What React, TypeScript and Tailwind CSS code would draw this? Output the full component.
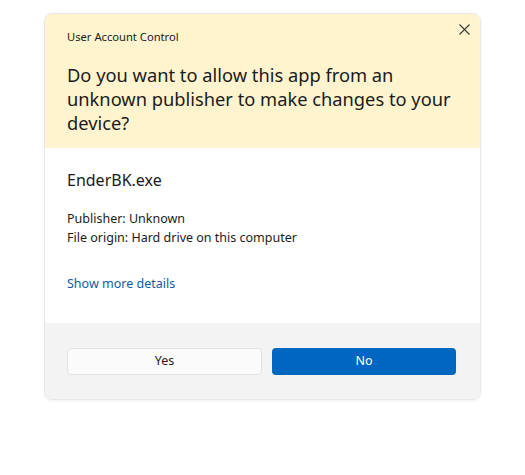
import React from "react";

const font = { fontFamily: '"Noto Sans", "Open Sans", sans-serif' };

// ─── close glyph ──────────────────────────────────────────────────────────
const CloseIcon = () => (
  <svg width="11" height="11" viewBox="0 0 11 11" className="text-[#3a3a3a]">
    <path d="M0.5 0.5 L10.5 10.5 M10.5 0.5 L0.5 10.5" stroke="currentColor" strokeWidth="1.1" fill="none" />
  </svg>
);

export default function App() {
  return (
    <div className="w-[525px] h-[475px] bg-white pt-[13px] pl-[44px]" style={font}>
      <div className="w-[437px] rounded-[8px] overflow-hidden border border-[#e8e8e8] shadow-[0_1px_3px_rgba(0,0,0,0.06)]">
        {/* Header */}
        <div className="relative bg-[#fff4ce] h-[134px] pl-[22px] pr-[20px] pt-[15px]">
          <button className="absolute right-[6px] top-[5px] w-[20px] h-[20px] flex items-center justify-center">
            <CloseIcon />
          </button>
          <div className="text-[11.2px] leading-[16px] text-[#1b1b1b]">User Account Control</div>
          <div className="mt-[18px] text-[18.3px] leading-[24px] text-[#1b1b1b]">
            Do you want to allow this app from an unknown publisher to make changes to your device?
          </div>
        </div>

        {/* Body */}
        <div className="bg-white h-[175px] pl-[22px] pt-[21px]">
          <div className="text-[16px] leading-[22px] text-[#1b1b1b]">EnderBK.exe</div>
          <div className="mt-[18px] text-[12.5px] leading-[19px] text-[#1b1b1b]">
            <div>Publisher: Unknown</div>
            <div>File origin: Hard drive on this computer</div>
          </div>
          <div className="mt-[27px] text-[12.5px] leading-[19px] text-[#0f5aa8]">Show more details</div>
        </div>

        {/* Footer */}
        <div className="bg-[#f3f3f3] h-[76px] pl-[22px] pt-[25px] flex gap-[10px]">
          <button className="w-[195px] h-[27px] rounded-[4px] bg-[#fbfbfb] border border-[#e3e3e3] text-[12.5px] text-[#1b1b1b]">
            Yes
          </button>
          <button className="w-[184px] h-[27px] rounded-[4px] bg-[#0067c0] text-[12.5px] text-white">
            No
          </button>
        </div>
      </div>
    </div>
  );
}
